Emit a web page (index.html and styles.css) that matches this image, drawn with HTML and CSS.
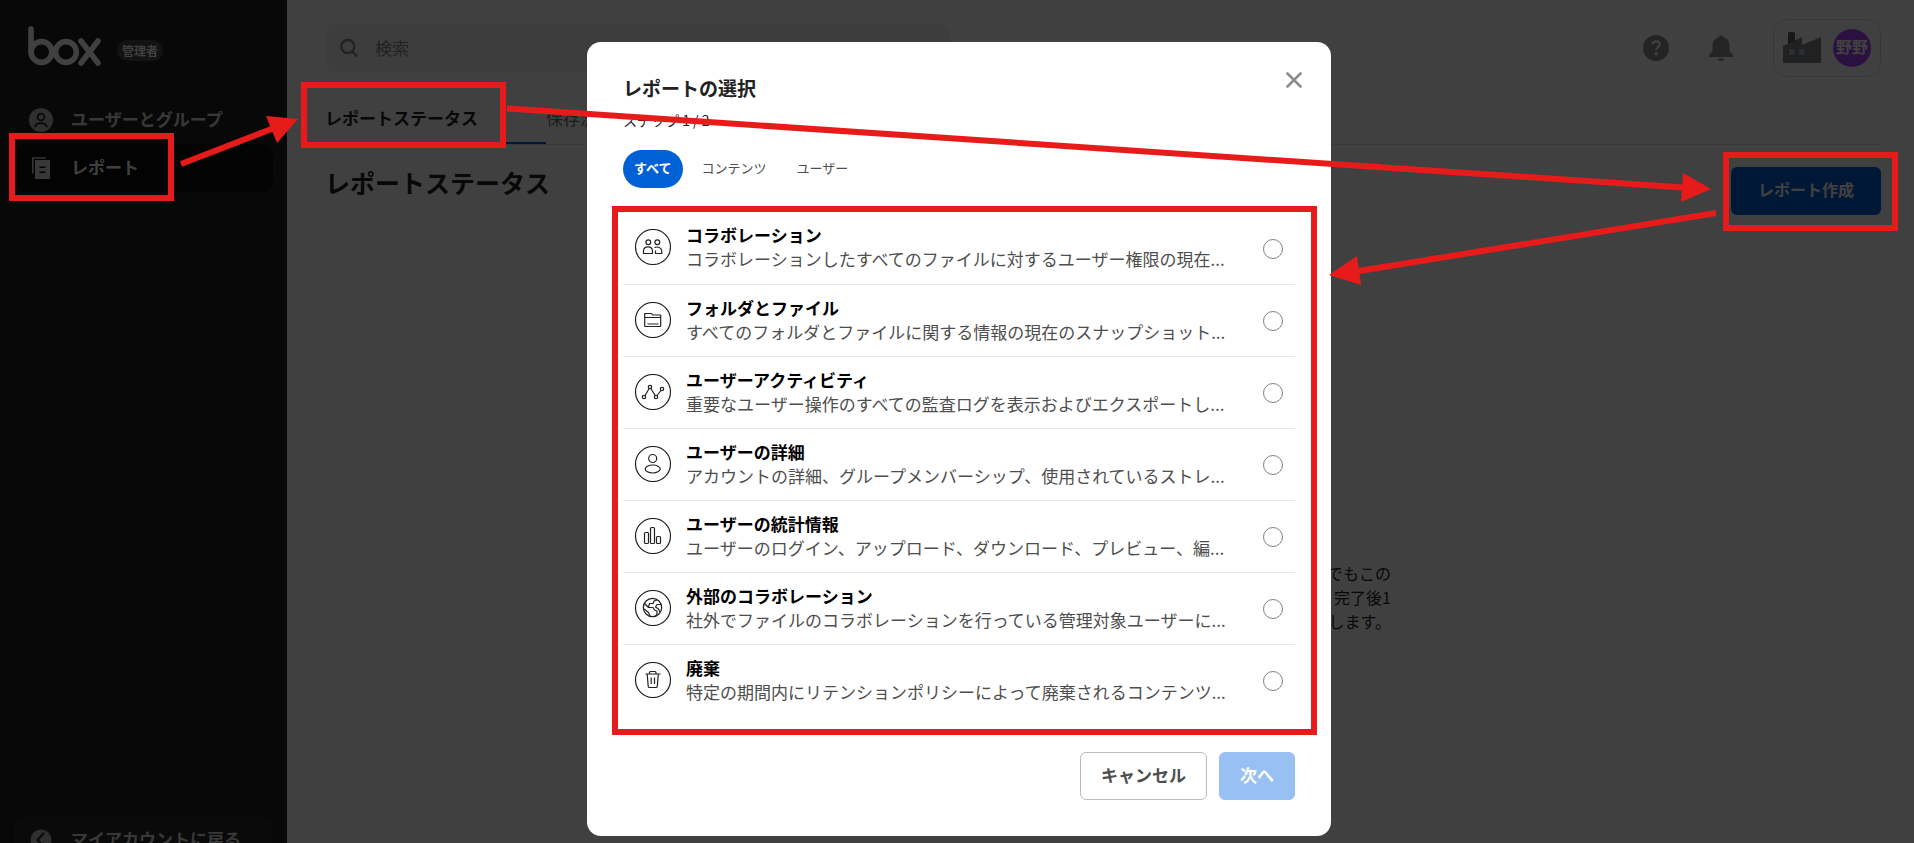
FILE: index.html
```html
<!DOCTYPE html>
<html lang="ja">
<head>
<meta charset="utf-8">
<title>レポートステータス</title>
<link rel="stylesheet" href="styles.css">
</head>
<body>
<div class="app">
  <aside class="sidebar">
    <div class="brand">
      <svg class="logo" width="74" height="40" viewBox="0 0 74 40" fill="none" stroke="currentColor" stroke-width="5.6" stroke-linecap="round" aria-label="box">
        <path d="M3 3v23"/><circle cx="13.5" cy="26" r="10.4"/><circle cx="38" cy="26" r="10.4"/><path d="M53 15l17 22M70 15L53 37"/>
      </svg>
      <span class="badge">管理者</span>
    </div>
    <nav class="nav">
      <a class="nav-item" href="#users">
        <svg width="24" height="24" viewBox="0 0 24 24"><circle cx="12" cy="12" r="12" fill="#bbb"/><g fill="none" stroke="#222" stroke-width="1.8" stroke-linecap="round"><circle cx="12" cy="9" r="3.4"/><path d="M6 18.500c2-4.600 10-4.600 12 0"/></g></svg>
        <span>ユーザーとグループ</span>
      </a>
      <a class="nav-item nav-active" href="#reports">
        <svg width="24" height="24" viewBox="0 0 24 24"><path d="M3.800 17.500V2h13" fill="none" stroke="#ddd" stroke-width="1.500"/><path d="M6 4h15v19H6z" fill="#ddd"/><path d="M11 11.200h5M11 16.200h5" stroke="#0c0c0c" stroke-width="1.500" stroke-linecap="round"/></svg>
        <span>レポート</span>
      </a>
    </nav>
    <a class="nav-item nav-back" href="#account">
      <svg width="24" height="24" viewBox="0 0 24 24"><circle cx="12" cy="12" r="10.500" fill="#bbb"/><path d="M14.500 5.500L8.500 12l6 6.500" fill="none" stroke="#222" stroke-width="2" stroke-linecap="round"/></svg>
      <span>マイアカウントに戻る</span>
    </a>
  </aside>

  <main class="main">
    <header class="topbar">
      <label class="search">
        <svg width="20" height="20" viewBox="0 0 20 20" fill="none" stroke="#888" stroke-width="2.400" stroke-linecap="round"><circle cx="8.800" cy="8.500" r="6.500"/><path d="M13.500 13.500l4 4.500"/></svg>
        <input type="search" placeholder="検索" aria-label="検索">
      </label>
      <div class="tools">
        <button class="tool" type="button" aria-label="ヘルプ">
          <svg width="26" height="26" viewBox="0 0 26 26"><circle cx="13" cy="13" r="13" fill="#909090"/><path d="M9.500 9.500c.3-4.200 7.200-4 7.200-.2 0 2.700-3.500 2.700-3.500 5.800" fill="none" stroke="#fff" stroke-width="2.200"/><circle cx="13.200" cy="18.800" r="1.700" fill="#fff"/></svg>
        </button>
        <button class="tool" type="button" aria-label="通知">
          <svg width="26" height="26" viewBox="0 0 26 26" fill="#909090"><path d="M10.700 2.300a2.400 2.400 0 0 1 4.600 0C19.800 3.500 21.500 7 21.500 11v5.500L25 20v2H1v-2l3.500-3.500V11c0-4 1.700-7.500 6.200-8.700zM10 23.500h6a3 2.500 0 0 1-6 0z"/></svg>
        </button>
        <button class="account" type="button" aria-label="アカウント">
          <svg width="38" height="32" viewBox="0 0 38 32"><path d="M5 1.500Q5 0 6.500 0h4Q12 0 12 1.500V16H5z" fill="#5c5c5c"/><path d="M0 30V14L19 5v8l19-8v25q0 1-1 1H1q-1 0-1-1z" fill="#848484"/><path d="M6 17h5.500v5.500H6zM16 17h5.500v5.500H16z" fill="#a9bccb"/></svg>
          <span class="avatar">野野</span>
        </button>
      </div>
    </header>
    <div class="tabs">
      <a class="tab tab-active" href="#status">レポートステータス</a>
      <a class="tab" href="#saved">保存済</a>
    </div>
    <div class="heading">
      <h1>レポートステータス</h1>
      <button class="create" type="button">レポート作成</button>
    </div>
    <p class="note">でもこの<br>完了後1<br>します。</p>
  </main>
</div>

<div class="backdrop">
  <section class="modal" role="dialog" aria-labelledby="dialog-title">
    <button class="close" type="button" aria-label="閉じる">
      <svg width="16" height="16" viewBox="0 0 16 16" stroke="#8c8c8c" stroke-width="2.600" stroke-linecap="round"><path d="M1.500 1.500l13 13M14.500 1.500l-13 13"/></svg>
    </button>
    <h2 id="dialog-title">レポートの選択</h2>
    <p class="step">ステップ 1 / 2</p>
    <div class="filters">
      <button class="filter filter-on" type="button">すべて</button>
      <button class="filter" type="button">コンテンツ</button>
      <button class="filter" type="button">ユーザー</button>
    </div>
    <div class="list">
      <label class="row">
        <svg class="icon" viewBox="0 0 36 36"><circle cx="18" cy="18" r="17.500"/><circle cx="13.300" cy="13.200" r="2.400"/><circle cx="22.300" cy="13.200" r="2.400"/><path d="M8.500 24.500v-2.500c0-5.500 9-5.500 9 0v2.500zM19.500 18.600c3-1.500 7.300 0 7.300 3.400v2.500h-6.300v-3"/></svg>
        <span class="text"><span class="name">コラボレーション</span><span class="desc">コラボレーションしたすべてのファイルに対するユーザー権限の現在...</span></span>
        <input type="radio" name="report">
      </label>
      <label class="row">
        <svg class="icon" viewBox="0 0 36 36"><circle cx="18" cy="18" r="17.500"/><path d="M9.700 24V11.500h6.800l1.200 1.500h8v11q0 .500-.500.500h-15q-.5 0-.5-.5zM9.700 15.500h16M12.500 22h11"/></svg>
        <span class="text"><span class="name">フォルダとファイル</span><span class="desc">すべてのフォルダとファイルに関する情報の現在のスナップショット...</span></span>
        <input type="radio" name="report">
      </label>
      <label class="row">
        <svg class="icon" viewBox="0 0 36 36"><circle cx="18" cy="18" r="17.500"/><circle cx="9" cy="23" r="1.700"/><circle cx="15" cy="13" r="1.700"/><circle cx="21" cy="23" r="1.700"/><circle cx="27" cy="15" r="1.700"/><path d="M10 21.500l4.200-7M15.800 14.500l4.400 7M22 21.500l4-5"/></svg>
        <span class="text"><span class="name">ユーザーアクティビティ</span><span class="desc">重要なユーザー操作のすべての監査ログを表示およびエクスポートし...</span></span>
        <input type="radio" name="report">
      </label>
      <label class="row">
        <svg class="icon" viewBox="0 0 36 36"><circle cx="18" cy="18" r="17.500"/><circle cx="17.700" cy="12.500" r="4"/><ellipse cx="17.700" cy="23" rx="7.500" ry="4"/></svg>
        <span class="text"><span class="name">ユーザーの詳細</span><span class="desc">アカウントの詳細、グループメンバーシップ、使用されているストレ...</span></span>
        <input type="radio" name="report">
      </label>
      <label class="row">
        <svg class="icon" viewBox="0 0 36 36"><circle cx="18" cy="18" r="17.500"/><rect x="9.500" y="14.500" width="4" height="11" rx="1"/><rect x="15.500" y="9.500" width="4" height="16" rx="1"/><rect x="21.500" y="18.500" width="4" height="7" rx="1"/></svg>
        <span class="text"><span class="name">ユーザーの統計情報</span><span class="desc">ユーザーのログイン、アップロード、ダウンロード、プレビュー、編...</span></span>
        <input type="radio" name="report">
      </label>
      <label class="row">
        <svg class="icon" viewBox="0 0 36 36"><circle cx="18" cy="18" r="17.500"/><circle cx="17.500" cy="17.500" r="9.200"/><path d="M9.500 13.500l4 4h4.500l1.500 2.500 2.500 1v3l-2 2.500M13.500 17l1-3.500h3.500l1-2.500 3-1M9 19l4.500 3.500 1.500 3.500M26 14.500h-4l-1.500 2.500 3 2 1.500 3"/></svg>
        <span class="text"><span class="name">外部のコラボレーション</span><span class="desc">社外でファイルのコラボレーションを行っている管理対象ユーザーに...</span></span>
        <input type="radio" name="report">
      </label>
      <label class="row">
        <svg class="icon" viewBox="0 0 36 36"><circle cx="18" cy="18" r="17.500"/><path d="M10.500 12h15M14.500 12v-1.500q0-1 1-1h4.500q1 0 1 1V12M12.200 12l1 12.200q.1 1.300 1.300 1.300h6.500q1.200 0 1.300-1.300l1-12.200M16.200 15.500v6.500M19.500 15.500v6.500"/></svg>
        <span class="text"><span class="name">廃棄</span><span class="desc">特定の期間内にリテンションポリシーによって廃棄されるコンテンツ...</span></span>
        <input type="radio" name="report">
      </label>
    </div>
    <div class="actions">
      <button class="btn" type="button">キャンセル</button>
      <button class="btn btn-next" type="button">次へ</button>
    </div>
  </section>
</div>

<svg class="marks" viewBox="0 0 1914 843" aria-hidden="true">
  <g fill="none" stroke="#e81b1b" stroke-width="6">
    <rect x="12" y="136" width="159" height="62"/>
    <rect x="304" y="85" width="199" height="60"/>
    <rect x="1726" y="155" width="169" height="73"/>
    <rect x="615" y="209" width="699" height="523"/>
    <path d="M181 164l93-36M507 108.500l1176 79M1716 213l-357 58"/>
  </g>
  <path fill="#e81b1b" d="M298 119l-32-3 11 27zM1711 189l-28-16-2 29zM1329 275l28-19 4 29z"/>
</svg>
</body>
</html>
```
FILE: styles.css
```css
* { box-sizing: border-box; }
body {
  margin: 0;
  height: 100vh;
  overflow: hidden;
  font-family: "Noto Sans CJK JP", "Noto Sans", sans-serif;
  font-size: 17px;
  line-height: 24px;
  color: #222;
}
h1, h2, p { margin: 0; }
button, input { font: inherit; color: inherit; }
button { border: 0; padding: 0; background: none; cursor: pointer; }
a { color: inherit; text-decoration: none; }
svg { display: block; flex: none; }

.app { display: flex; height: 100vh; background: #fff; }
.sidebar {
  flex: none;
  display: flex;
  flex-direction: column;
  width: 287px;
  height: calc(100vh + 21px);
  padding: 26px 14px 0;
  background: #222;
  color: #e0e0e0;
}
.brand { display: flex; align-items: center; gap: 15px; height: 40px; padding-left: 14px; margin-bottom: 30px; }
.logo { color: #fff; }
.badge {
  margin-top: 8px;
  padding: 0 5px;
  border-radius: 12px;
  background: #4c4c4c;
  color: #fff;
  font-size: 12px;
  font-weight: 700;
  line-height: 21px;
}
.nav-item {
  display: flex;
  align-items: center;
  gap: 17px;
  height: 48px;
  padding-left: 15px;
  border-radius: 12px;
  font-weight: 700;
}
.nav-item span { padding: 0 0 3px 1px; }
.nav-active { background: #0c0c0c; color: #fff; }
.nav-back { margin-top: auto; background: #282828; }

.main { flex: 1; min-width: 0; padding: 19px 33px 0 38px; }
.topbar { display: flex; align-items: center; justify-content: space-between; height: 58px; }
.search {
  display: flex;
  align-items: center;
  gap: 14px;
  width: 624px;
  height: 50px;
  padding: 0 14px;
  border-radius: 12px;
  background: #f1f1f1;
}
.search input { flex: 1; min-width: 0; border: 0; outline: 0; background: none; }
.search input::placeholder { color: #888; opacity: 1; }
.tools { display: flex; align-items: center; gap: 39px; }
.account {
  display: flex;
  align-items: center;
  justify-content: space-between;
  width: 108px;
  height: 58px;
  padding: 0 9px;
  border: 1px solid #dadada;
  border-radius: 14px;
}
.avatar {
  width: 38px;
  height: 38px;
  border-radius: 50%;
  background: #ac44fc;
  color: #fff;
  font-size: 16px;
  font-weight: 700;
  line-height: 34px;
}
.tabs { display: flex; height: 68px; border-bottom: 1px solid #e2e2e2; }
.tab { padding: 29px 0 0; color: #777; }
.tab-active { width: 221px; color: #222; font-weight: 700; border-bottom: 2px solid #0061d5; }
.heading { display: flex; align-items: center; justify-content: space-between; padding-top: 22px; }
h1 { padding-bottom: 17px; font-size: 25px; line-height: 31px; }
.create {
  width: 150px;
  height: 48px;
  padding-bottom: 4px;
  border-radius: 6px;
  background: #0061d5;
  color: #fff;
  font-size: 16px;
  font-weight: 700;
}
.note { max-width: 576px; margin: 346px auto 0; text-align: right; font-size: 16px; }

.backdrop {
  position: fixed;
  inset: 0;
  display: flex;
  align-items: flex-start;
  justify-content: center;
  padding: 42px 0 0 4px;
  background: rgba(0, 0, 0, .75);
}
.modal { position: relative; width: 744px; padding: 32px 36px 36px; border-radius: 14px; background: #fff; }
.close { position: absolute; top: 30px; right: 29px; }
h2 { font-size: 19px; line-height: 28px; }
.step { margin-top: 7px; font-size: 14px; line-height: 22px; }
.filters { display: flex; gap: 8px; margin-top: 19px; }
.filter { height: 38px; padding: 0 11px 2px; border-radius: 19px; color: #4e4e4e; font-size: 13px; }
.filter-on { background: #0061d5; color: #fff; font-weight: 700; }
.list { margin-top: 24px; }
.row { display: flex; align-items: center; height: 72px; padding: 0 12px 2px; border-bottom: 1px solid #e8e8e8; }
.row:first-child { height: 73px; }
.row:last-child { border-bottom-color: transparent; }
.icon { width: 36px; height: 36px; fill: none; stroke: #222; stroke-width: 1.2; stroke-linejoin: round; }
.text { flex: 1; min-width: 0; margin-left: 15px; }
.name, .desc { display: block; white-space: nowrap; }
.name { color: #000; font-weight: 700; }
.desc { color: #4e4e4e; }
.row input {
  appearance: none;
  width: 20px;
  height: 20px;
  margin: 3px 0 0;
  border: 1px solid #808080;
  border-radius: 50%;
  background: #fff;
}
.actions { display: flex; justify-content: flex-end; gap: 12px; margin-top: 35px; }
.btn { height: 48px; padding: 0 20px 3px; border: 1px solid #bcbcbc; border-radius: 6px; color: #4e4e4e; font-weight: 700; }
.btn-next { border-color: #99c0f2; background: #99c0f2; color: #fff; }

.marks { position: fixed; top: 0; left: 0; width: 1914px; height: 843px; pointer-events: none; }
```
